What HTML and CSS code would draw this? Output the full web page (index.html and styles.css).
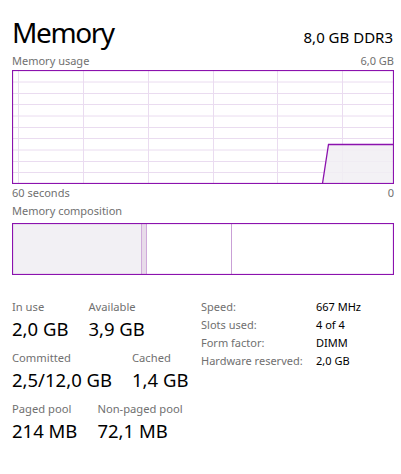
FILE: index.html
```html
<!DOCTYPE html>
<html>
<head>
<meta charset="utf-8">
<link rel="stylesheet" href="styles.css">
</head>
<body>
<div class="page">
  <div class="header">
    <div class="title">Memory</div>
    <div class="subtitle">8,0 GB DDR3</div>
  </div>
  <div class="graph-labels top">
    <span>Memory usage</span><span>6,0 GB</span>
  </div>
  <svg class="usage" width="382" height="114" viewBox="0 0 382 114">
    <g stroke="#eadcf0" stroke-width="1">
      <line x1="0" y1="12" x2="382" y2="12"/>
      <line x1="0" y1="23.5" x2="382" y2="23.5"/>
      <line x1="0" y1="34.5" x2="382" y2="34.5"/>
      <line x1="0" y1="46" x2="382" y2="46"/>
      <line x1="0" y1="57.5" x2="382" y2="57.5"/>
      <line x1="0" y1="68.5" x2="382" y2="68.5"/>
      <line x1="0" y1="80" x2="382" y2="80"/>
      <line x1="0" y1="91.5" x2="382" y2="91.5"/>
      <line x1="0" y1="102.5" x2="382" y2="102.5"/>
      <line x1="6.5" y1="0" x2="6.5" y2="114"/>
      <line x1="71.5" y1="0" x2="71.5" y2="114"/>
      <line x1="136.5" y1="0" x2="136.5" y2="114"/>
      <line x1="201.5" y1="0" x2="201.5" y2="114"/>
      <line x1="265.5" y1="0" x2="265.5" y2="114"/>
      <line x1="330.5" y1="0" x2="330.5" y2="114"/>
    </g>
    <path d="M310.5 113.5 L316.5 74.5 L381 74.5 L381 113.5 Z" fill="#f1eef3" fill-opacity="0.85"/>
    <path d="M310.5 113.5 L316.5 74.5 L381 74.5" fill="none" stroke="#8b12ae" stroke-width="1.3"/>
    <rect x="0.5" y="0.5" width="381" height="113" fill="none" stroke="#8b12ae" stroke-width="1.2"/>
  </svg>
  <div class="graph-labels bottom">
    <span>60 seconds</span><span>0</span>
  </div>
  <div class="graph-labels comp-label">
    <span>Memory composition</span>
  </div>
  <svg class="composition" width="382" height="52" viewBox="0 0 382 52">
    <rect x="0" y="0" width="129" height="52" fill="#f2f0f4"/>
    <rect x="129" y="0" width="5" height="52" fill="#e8dbea"/>
    <line x1="129.5" y1="0" x2="129.5" y2="52" stroke="#cfa9da"/>
    <line x1="134.5" y1="0" x2="134.5" y2="52" stroke="#cfa9da"/>
    <line x1="219.5" y1="0" x2="219.5" y2="52" stroke="#c9a0d6"/>
    <rect x="0.5" y="0.5" width="381" height="51" fill="none" stroke="#8b12ae" stroke-width="1.2"/>
  </svg>
  <div class="stats">
    <div class="left">
      <div class="row">
        <div class="stat"><div class="label">In use</div><div class="value">2,0 GB</div></div>
        <div class="stat"><div class="label">Available</div><div class="value">3,9 GB</div></div>
      </div>
      <div class="row">
        <div class="stat"><div class="label">Committed</div><div class="value">2,5/12,0 GB</div></div>
        <div class="stat"><div class="label">Cached</div><div class="value">1,4 GB</div></div>
      </div>
      <div class="row">
        <div class="stat"><div class="label">Paged pool</div><div class="value">214 MB</div></div>
        <div class="stat"><div class="label">Non-paged pool</div><div class="value">72,1 MB</div></div>
      </div>
    </div>
    <div class="right">
      <div class="k">Speed:</div><div class="v">667 MHz</div>
      <div class="k">Slots used:</div><div class="v">4 of 4</div>
      <div class="k">Form factor:</div><div class="v">DIMM</div>
      <div class="k">Hardware reserved:</div><div class="v">2,0 GB</div>
    </div>
  </div>
</div>
</body>
</html>
```

FILE: styles.css
```css
html, body {
  margin: 0;
  padding: 0;
  background: #ffffff;
}
body {
  font-family: "Noto Sans", "Open Sans", "Liberation Sans", sans-serif;
  color: #000;
  width: 401px;
  height: 474px;
  overflow: hidden;
}
.page {
  padding: 14px 8px 0 12px;
}
.header {
  display: flex;
  justify-content: space-between;
  align-items: baseline;
  height: 40px;
}
.title {
  font-size: 28px;
  line-height: 36px;
  letter-spacing: -1.4px;
}
.subtitle {
  font-size: 15px;
  line-height: 20px;
}
.graph-labels {
  display: flex;
  justify-content: space-between;
  font-size: 11px;
  line-height: 14px;
  color: #707070;
  width: 382px;
}
.graph-labels.top {
  height: 16px;
  align-items: flex-start;
}
.usage, .composition {
  display: block;
}
.graph-labels.bottom {
  margin-top: 2px;
  height: 16px;
}
.graph-labels.comp-label {
  margin-top: 2px;
  height: 19px;
}
.stats {
  display: flex;
  margin-top: 25px;
}
.left {
  width: 189px;
  display: flex;
  flex-direction: column;
  gap: 10px;
}
.row {
  display: flex;
  gap: 20px;
}
.label {
  font-size: 11.2px;
  line-height: 14px;
  color: #707070;
}
.value {
  font-size: 18.5px;
  line-height: 24px;
  margin-top: 3px;
}
.right {
  display: grid;
  grid-template-columns: 115px auto;
  align-content: start;
  font-size: 11px;
  line-height: 18px;
  margin-top: -2px;
}
.k {
  color: #707070;
}
.v {
  color: #000;
}
```
